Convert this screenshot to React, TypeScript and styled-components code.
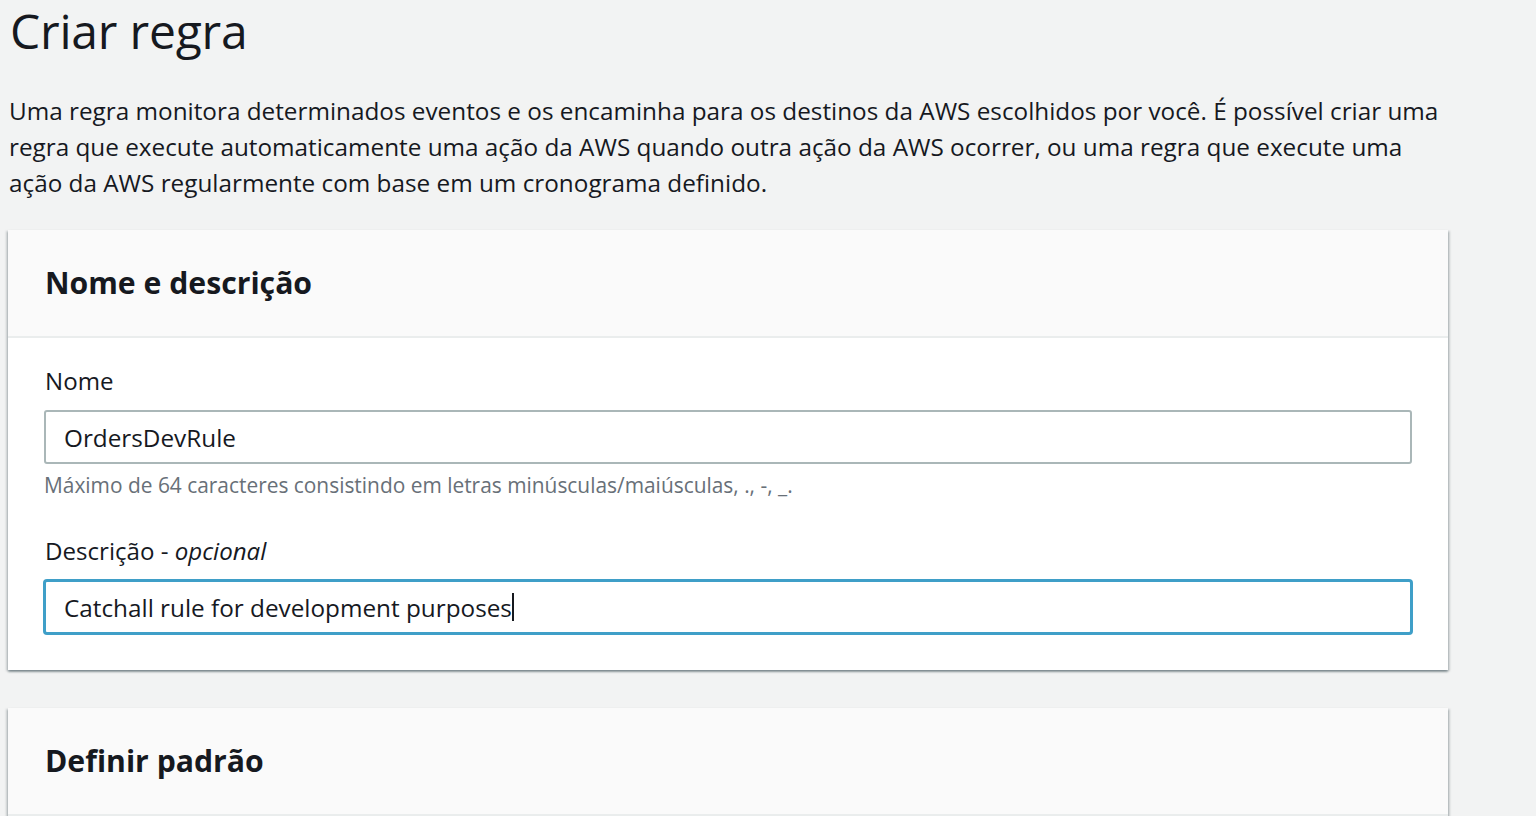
import React from "react";
import styled, { createGlobalStyle } from "styled-components";

const Global = createGlobalStyle`
  html, body { margin: 0; padding: 0; background: #f2f3f3; }
  body { font-family: "Open Sans", "Noto Sans", sans-serif; color: #16191f; }
  * { box-sizing: border-box; }
`;

const Page = styled.main`
  padding: 0 88px 0 8px;
  display: flex;
  flex-direction: column;
`;

const Title = styled.h1`
  margin: 0;
  padding: 0 0 0 2px;
  font-size: 48px;
  font-weight: 500;
  line-height: 62px;
  letter-spacing: -0.2px;
`;

const Intro = styled.p`
  margin: 31px 0 0 1px;
  font-size: 24.3px;
  line-height: 36px;
  font-weight: 400;
`;

const Line = styled.span`
  display: block;
  white-space: nowrap;
`;

const Card = styled.section<{ $gap?: number }>`
  margin-top: ${(p) => p.$gap ?? 0}px;
  background: #fff;
  box-shadow: 0 2px 2px 0 rgba(0, 28, 36, 0.35), 2px 1px 2px 0 rgba(0, 28, 36, 0.15),
    -2px 1px 2px 0 rgba(0, 28, 36, 0.15);
`;

const CardHeader = styled.header`
  background: #fafafa;
  border-bottom: 2px solid #eaeded;
  padding: 0 36px 0 37px;
  height: 108px;
  display: flex;
  align-items: center;
`;

const CardTitle = styled.h2`
  margin: 0;
  font-size: 30.2px;
  font-weight: 700;
  line-height: 40px;
`;

const CardBody = styled.div<{ $minHeight?: number }>`
  padding: 26px 36px 36px;
  display: flex;
  flex-direction: column;
  min-height: ${(p) => p.$minHeight ?? 0}px;
`;

const Field = styled.div<{ $top?: number }>`
  display: flex;
  flex-direction: column;
  margin-top: ${(p) => p.$top ?? 0}px;
`;

const Label = styled.label`
  font-size: 24.1px;
  line-height: 34px;
  padding-left: 1px;
  margin-bottom: 12px;
  em {
    font-style: italic;
  }
`;

const InputBox = styled.div<{ $focused?: boolean }>`
  height: 54px;
  border: 2px solid ${(p) => (p.$focused ? "#3f9fc8" : "#aab7b8")};
  box-shadow: ${(p) => (p.$focused ? "0 0 0 1px #3f9fc8" : "none")};
  border-radius: 3px;
  background: #fff;
  display: flex;
  align-items: center;
  padding: 0 18px;
  font-size: 24.3px;
  white-space: nowrap;
`;

const Caret = styled.span`
  display: inline-block;
  width: 2px;
  height: 28px;
  background: #16191f;
`;

const Hint = styled.div`
  font-size: 20.9px;
  line-height: 30px;
  color: #687078;
  margin-top: 6px;
`;

export default function App() {
  return (
    <>
      <Global />
      <Page>
        <Title>Criar regra</Title>
        <Intro>
          <Line>
            Uma regra monitora determinados eventos e os encaminha para os destinos da AWS escolhidos por você. É possível criar uma
          </Line>
          <Line>
            regra que execute automaticamente uma ação da AWS quando outra ação da AWS ocorrer, ou uma regra que execute uma
          </Line>
          <Line>ação da AWS regularmente com base em um cronograma definido.</Line>
        </Intro>
        <Card $gap={29}>
          <CardHeader>
            <CardTitle>Nome e descrição</CardTitle>
          </CardHeader>
          <CardBody>
            <Field>
              <Label>Nome</Label>
              <InputBox>OrdersDevRule</InputBox>
              <Hint>Máximo de 64 caracteres consistindo em letras minúsculas/maiúsculas, ., -, _.</Hint>
            </Field>
            <Field $top={34}>
              <Label>
                Descrição - <em>opcional</em>
              </Label>
              <InputBox $focused>
                Catchall rule for development purposes
                <Caret />
              </InputBox>
            </Field>
          </CardBody>
        </Card>
        <Card $gap={38}>
          <CardHeader>
            <CardTitle>Definir padrão</CardTitle>
          </CardHeader>
          <CardBody $minHeight={60} />
        </Card>
      </Page>
    </>
  );
}
